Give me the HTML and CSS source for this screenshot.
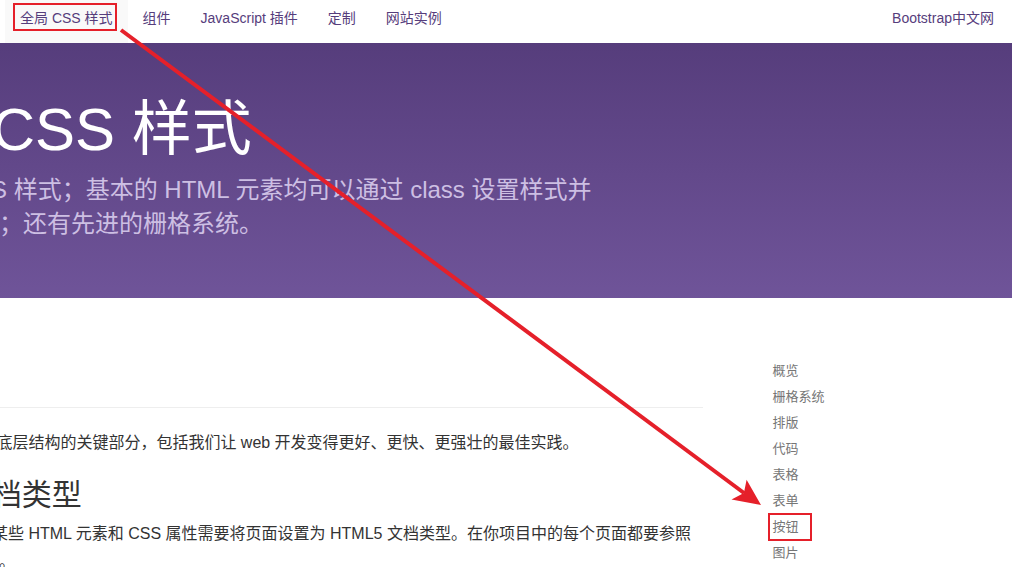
FILE: index.html
```html
<!DOCTYPE html>
<html lang="zh-CN">
<head>
<meta charset="utf-8">
<title>全局 CSS 样式 · Bootstrap</title>
<link rel="stylesheet" href="styles.css">
</head>
<body>
<div class="page">
  <header class="topnav">
    <ul class="nav-list">
      <li class="active"><a href="#">全局 CSS 样式</a></li>
      <li><a href="#">组件</a></li>
      <li><a href="#">JavaScript 插件</a></li>
      <li><a href="#">定制</a></li>
      <li><a href="#">网站实例</a></li>
    </ul>
    <ul class="nav-list nav-right">
      <li><a href="#">Bootstrap中文网</a></li>
    </ul>
  </header>

  <section class="hero">
    <div class="container">
      <h1 class="hero-title">全局 CSS 样式</h1>
      <p class="hero-lead">设置全局 CSS 样式；基本的 HTML 元素均可以通过 class 设置样式并<br>得到增强效果；还有先进的栅格系统。</p>
    </div>
  </section>

  <div class="container main">
    <div class="content">
      <h1 class="page-header">概览</h1>
      <p class="text">深入了解 Bootstrap 底层结构的关键部分，包括我们让 web 开发变得更好、更快、更强壮的最佳实践。</p>
      <h2 class="section-title">HTML5 文档类型</h2>
      <p class="text">Bootstrap 使用到的某些 HTML 元素和 CSS 属性需要将页面设置为 HTML5 文档类型。在你项目中的每个页面都要参照<br>下面的格式进行设置。</p>
    </div>
    <aside class="sidebar">
      <ul class="side-nav">
        <li><a href="#">概览</a></li>
        <li><a href="#">栅格系统</a></li>
        <li><a href="#">排版</a></li>
        <li><a href="#">代码</a></li>
        <li><a href="#">表格</a></li>
        <li><a href="#">表单</a></li>
        <li><a href="#">按钮</a></li>
        <li><a href="#">图片</a></li>
      </ul>
    </aside>
  </div>

  <svg class="annot" width="1012" height="567" viewBox="0 0 1012 567" aria-hidden="true">
    <rect x="14" y="4" width="102" height="26" fill="none" stroke="#e5202a" stroke-width="2"/>
    <rect x="769" y="514" width="42" height="26" fill="none" stroke="#e5202a" stroke-width="2"/>
    <line x1="121" y1="30" x2="744" y2="493" stroke="#e5202a" stroke-width="4"/>
    <polygon points="761,505 731.5,499.5 743.9,493.1 746.6,479.7" fill="#e5202a"/>
  </svg>
</div>
</body>
</html>
```

FILE: styles.css
```css
* { box-sizing: border-box; }

html, body {
  margin: 0;
  padding: 0;
  background: #fff;
}

body {
  font-family: "Liberation Sans", "Noto Sans CJK SC", sans-serif;
  color: #333;
  font-size: 14px;
}

.page {
  position: relative;
  width: 1012px;
  height: 567px;
  overflow: hidden;
}

/* top navigation */
.topnav {
  display: flex;
  justify-content: space-between;
  height: 43px;
  padding: 0 3px 0 5px;
  background: #fff;
}

.nav-list {
  display: flex;
  margin: 0;
  padding: 0;
  list-style: none;
}

.nav-list a {
  display: block;
  padding: 8px 15px 15px;
  line-height: 20px;
  font-size: 14px;
  color: #563d7c;
  text-decoration: none;
}

.nav-list .active a {
  background: #f9f9f9;
}

/* shared container (page is scrolled horizontally) */
.container {
  width: 1170px;
  margin-left: -160px;
  padding: 0 15px;
}

/* purple header */
.hero {
  height: 255px;
  background: linear-gradient(to bottom, #563d7c 0%, #6f5499 100%);
  padding-top: 54px;
}

.hero-title {
  margin: 0;
  font-size: 60px;
  line-height: 66px;
  font-weight: 400;
  color: #fff;
  white-space: nowrap;
}

.hero-lead {
  margin: 10px 0 0;
  font-size: 24px;
  line-height: 33.6px;
  color: #cdbfe3;
  white-space: nowrap;
}

/* main area */
.main {
  display: flex;
  padding-top: 60px;
}

.content {
  flex: 0 0 847.5px;
}

.page-header {
  margin: 0 0 21px;
  padding-bottom: 9px;
  border-bottom: 1px solid #eee;
  font-size: 36px;
  line-height: 39.6px;
  font-weight: 400;
}

.text {
  margin: 0 0 10px;
  font-size: 16px;
  line-height: 28px;
  color: #333;
  white-space: nowrap;
}

.section-title {
  margin: 21px 0 9px;
  font-size: 30px;
  line-height: 33px;
  font-weight: 400;
  color: #333;
  white-space: nowrap;
}

.sidebar {
  flex: 0 0 auto;
  margin-left: 30px;
  padding-left: 20px;
}

.side-nav {
  margin: 0;
  padding: 0;
  list-style: none;
}

.side-nav a {
  display: block;
  padding: 4px 20px;
  font-size: 13px;
  line-height: 18px;
  color: #767676;
  text-decoration: none;
}

/* screenshot annotations */
.annot {
  position: absolute;
  left: 0;
  top: 0;
  pointer-events: none;
}
```
